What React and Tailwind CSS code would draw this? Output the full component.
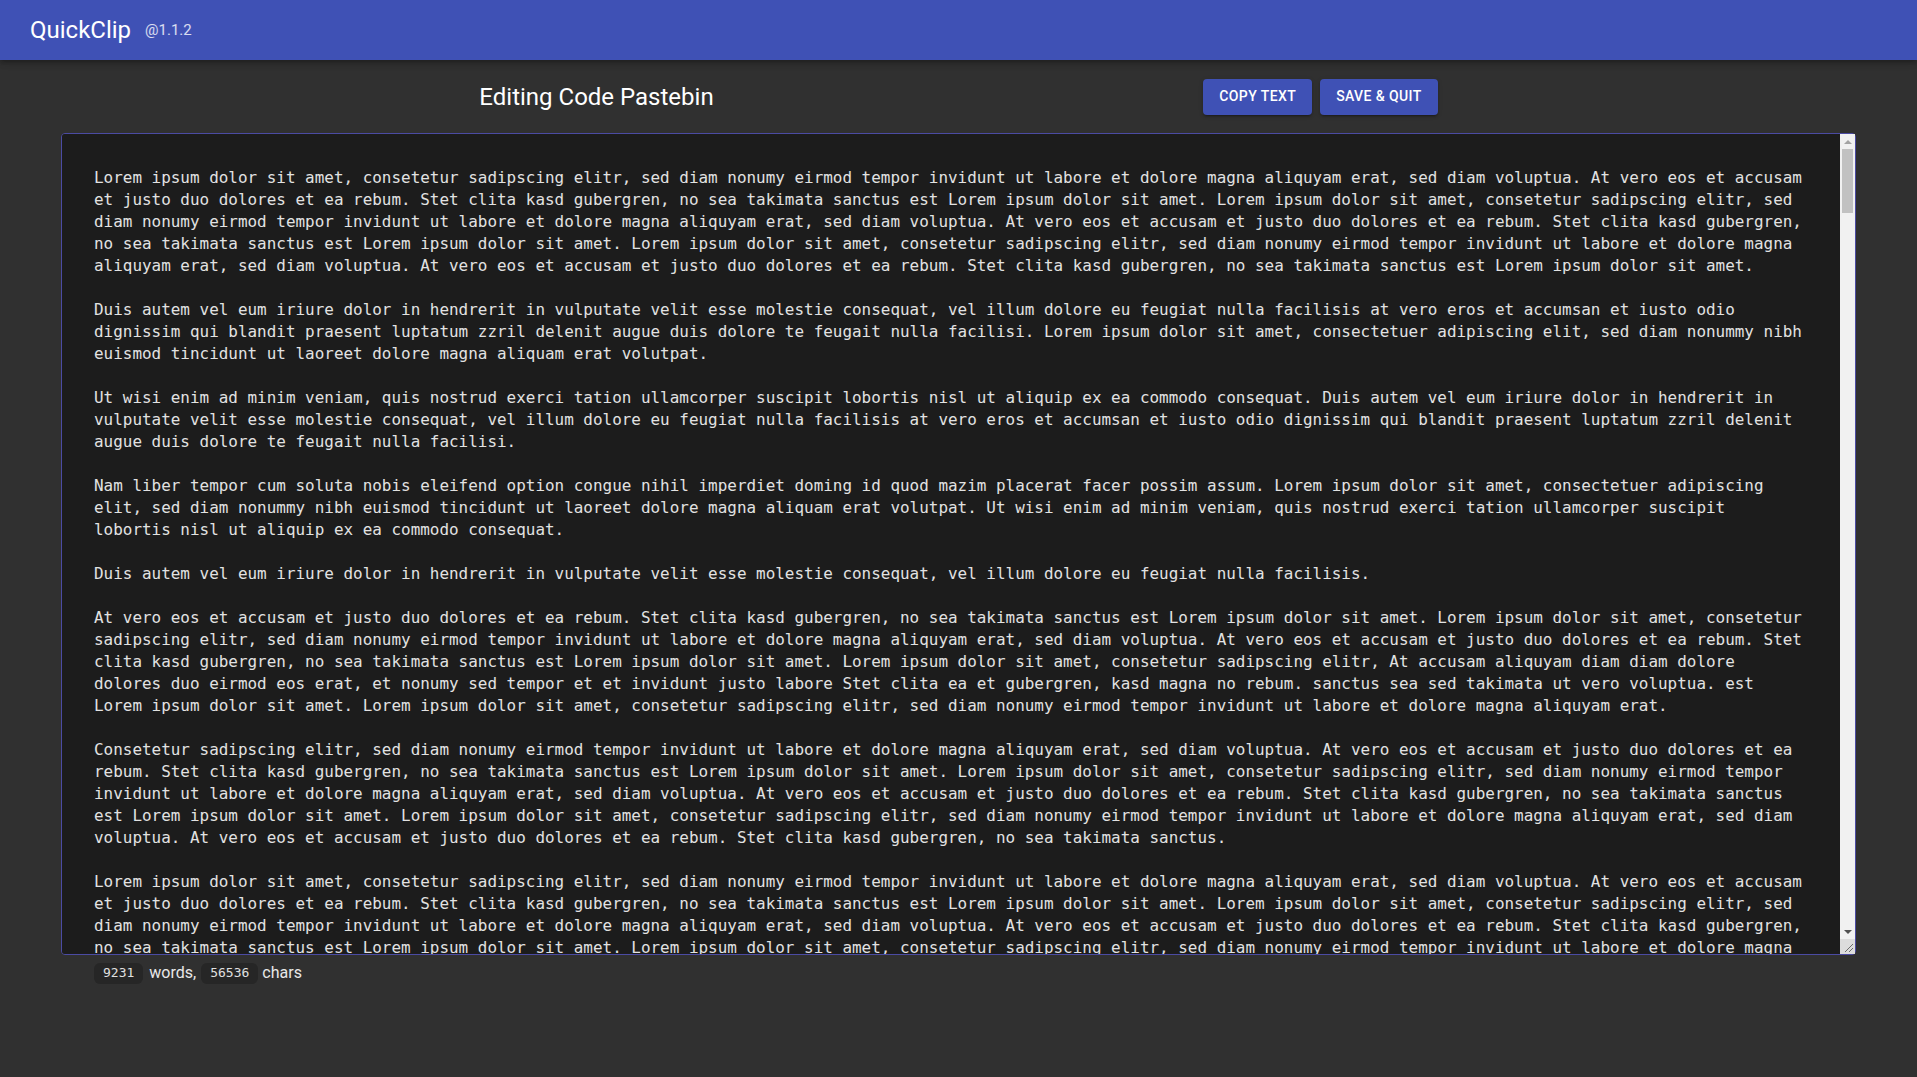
import React, { useState } from 'react';

const PARAGRAPHS = [
  'Lorem ipsum dolor sit amet, consetetur sadipscing elitr, sed diam nonumy eirmod tempor invidunt ut labore et dolore magna aliquyam erat, sed diam voluptua. At vero eos et accusam et justo duo dolores et ea rebum. Stet clita kasd gubergren, no sea takimata sanctus est Lorem ipsum dolor sit amet. Lorem ipsum dolor sit amet, consetetur sadipscing elitr, sed diam nonumy eirmod tempor invidunt ut labore et dolore magna aliquyam erat, sed diam voluptua. At vero eos et accusam et justo duo dolores et ea rebum. Stet clita kasd gubergren, no sea takimata sanctus est Lorem ipsum dolor sit amet. Lorem ipsum dolor sit amet, consetetur sadipscing elitr, sed diam nonumy eirmod tempor invidunt ut labore et dolore magna aliquyam erat, sed diam voluptua. At vero eos et accusam et justo duo dolores et ea rebum. Stet clita kasd gubergren, no sea takimata sanctus est Lorem ipsum dolor sit amet.',
  'Duis autem vel eum iriure dolor in hendrerit in vulputate velit esse molestie consequat, vel illum dolore eu feugiat nulla facilisis at vero eros et accumsan et iusto odio dignissim qui blandit praesent luptatum zzril delenit augue duis dolore te feugait nulla facilisi. Lorem ipsum dolor sit amet, consectetuer adipiscing elit, sed diam nonummy nibh euismod tincidunt ut laoreet dolore magna aliquam erat volutpat.',
  'Ut wisi enim ad minim veniam, quis nostrud exerci tation ullamcorper suscipit lobortis nisl ut aliquip ex ea commodo consequat. Duis autem vel eum iriure dolor in hendrerit in vulputate velit esse molestie consequat, vel illum dolore eu feugiat nulla facilisis at vero eros et accumsan et iusto odio dignissim qui blandit praesent luptatum zzril delenit augue duis dolore te feugait nulla facilisi.',
  'Nam liber tempor cum soluta nobis eleifend option congue nihil imperdiet doming id quod mazim placerat facer possim assum. Lorem ipsum dolor sit amet, consectetuer adipiscing elit, sed diam nonummy nibh euismod tincidunt ut laoreet dolore magna aliquam erat volutpat. Ut wisi enim ad minim veniam, quis nostrud exerci tation ullamcorper suscipit lobortis nisl ut aliquip ex ea commodo consequat.',
  'Duis autem vel eum iriure dolor in hendrerit in vulputate velit esse molestie consequat, vel illum dolore eu feugiat nulla facilisis.',
  'At vero eos et accusam et justo duo dolores et ea rebum. Stet clita kasd gubergren, no sea takimata sanctus est Lorem ipsum dolor sit amet. Lorem ipsum dolor sit amet, consetetur sadipscing elitr, sed diam nonumy eirmod tempor invidunt ut labore et dolore magna aliquyam erat, sed diam voluptua. At vero eos et accusam et justo duo dolores et ea rebum. Stet clita kasd gubergren, no sea takimata sanctus est Lorem ipsum dolor sit amet. Lorem ipsum dolor sit amet, consetetur sadipscing elitr, At accusam aliquyam diam diam dolore dolores duo eirmod eos erat, et nonumy sed tempor et et invidunt justo labore Stet clita ea et gubergren, kasd magna no rebum. sanctus sea sed takimata ut vero voluptua. est Lorem ipsum dolor sit amet. Lorem ipsum dolor sit amet, consetetur sadipscing elitr, sed diam nonumy eirmod tempor invidunt ut labore et dolore magna aliquyam erat.',
  'Consetetur sadipscing elitr, sed diam nonumy eirmod tempor invidunt ut labore et dolore magna aliquyam erat, sed diam voluptua. At vero eos et accusam et justo duo dolores et ea rebum. Stet clita kasd gubergren, no sea takimata sanctus est Lorem ipsum dolor sit amet. Lorem ipsum dolor sit amet, consetetur sadipscing elitr, sed diam nonumy eirmod tempor invidunt ut labore et dolore magna aliquyam erat, sed diam voluptua. At vero eos et accusam et justo duo dolores et ea rebum. Stet clita kasd gubergren, no sea takimata sanctus est Lorem ipsum dolor sit amet. Lorem ipsum dolor sit amet, consetetur sadipscing elitr, sed diam nonumy eirmod tempor invidunt ut labore et dolore magna aliquyam erat, sed diam voluptua. At vero eos et accusam et justo duo dolores et ea rebum. Stet clita kasd gubergren, no sea takimata sanctus.',
];

// fill the paste up to the size of the saved clip
function buildText(size) {
  const parts = [];
  let len = 0;
  let i = 0;
  while (len < size) {
    const p = PARAGRAPHS[i % PARAGRAPHS.length];
    parts.push(p);
    len += p.length + 2;
    i++;
  }
  return parts.join('\n\n').slice(0, size);
}

function Header() {
  return (
    <header className="h-[60px] bg-[#3f51b5] flex items-center px-[30px] shadow-[0_2px_4px_-1px_rgba(0,0,0,0.2),0_4px_5px_0_rgba(0,0,0,0.14),0_1px_10px_0_rgba(0,0,0,0.12)] relative z-10">
      <span className="text-white text-[24px] leading-none font-['Roboto',sans-serif]">QuickClip</span>
      <span className="ml-[14px] text-[15px] text-white/80 font-['Roboto',sans-serif] leading-none">@1.1.2</span>
    </header>
  );
}

function Chip({ children }) {
  return (
    <code className="inline-flex items-center h-[21px] px-[9px] rounded-md bg-[#262626] text-[#e0e0e0] text-[13px] font-['DejaVu_Sans_Mono',monospace]">
      {children}
    </code>
  );
}

// classic light scrollbar drawn over the editor's right edge
function Scrollbar() {
  return (
    <div className="absolute top-px bottom-px right-px w-[15px] flex flex-col bg-[#f1f1f1] pointer-events-none">
      <div className="h-[15px] flex items-center justify-center">
        <div className="w-0 h-0 border-l-[4px] border-r-[4px] border-b-[4px] border-l-transparent border-r-transparent border-b-[#a3a3a3]" />
      </div>
      <div className="flex-1">
        <div className="mx-[2px] h-[64px] bg-[#c1c1c1]" />
      </div>
      <div className="h-[15px] flex items-center justify-center">
        <div className="w-0 h-0 border-l-[4px] border-r-[4px] border-t-[4px] border-l-transparent border-r-transparent border-t-[#505050]" />
      </div>
      <div className="h-[15px] bg-[#dcdcdc] flex items-end justify-end">
        <svg width="15" height="15" viewBox="0 0 15 15">
          <path d="M13 5 L5 13 M13 9 L9 13" stroke="#6b6b6b" strokeWidth="1" />
        </svg>
      </div>
    </div>
  );
}

export default function App() {
  const [text, setText] = useState(() => buildText(56536));
  const stats = { words: 9231, chars: 56536 };

  return (
    <div className="min-h-screen bg-[#303030] font-['Roboto',sans-serif]">
      <Header />
      <main className="mx-[61px]">
        <div className="w-[1448px] mx-auto h-[73px] grid grid-cols-2 items-center">
          <h1 className="text-center text-white text-[24px] font-normal">Editing Code Pastebin</h1>
          <div className="flex justify-center gap-2">
            <button className="h-9 px-4 rounded bg-[#3f51b5] text-white text-[14px] font-medium uppercase tracking-[0.4px] shadow-[0_3px_1px_-2px_rgba(0,0,0,0.2),0_2px_2px_0_rgba(0,0,0,0.14),0_1px_5px_0_rgba(0,0,0,0.12)]">
              Copy Text
            </button>
            <button className="h-9 px-4 rounded bg-[#3f51b5] text-white text-[14px] font-medium uppercase tracking-[0.4px] shadow-[0_3px_1px_-2px_rgba(0,0,0,0.2),0_2px_2px_0_rgba(0,0,0,0.14),0_1px_5px_0_rgba(0,0,0,0.12)]">
              Save &amp; Quit
            </button>
          </div>
        </div>
        <div className="relative">
          <textarea
            value={text}
            onChange={(e) => setText(e.target.value)}
            spellCheck={false}
            className="block w-full h-[822px] bg-[#1c1c1c] text-[#e2e2e2] border border-[#4b4ba3] rounded pl-8 pr-[48px] pt-[33px] pb-8 text-[15.95px] leading-[22px] font-['DejaVu_Sans_Mono',monospace] outline-none resize-none [scrollbar-width:none]"
          />
          <Scrollbar />
        </div>
        <div className="mt-[6px] ml-[33px] flex items-center text-[16px] text-[#e8e8e8]">
          <Chip>{stats.words}</Chip>
          <span className="ml-[6px] mr-[5px]">words,</span>
          <Chip>{stats.chars}</Chip>
          <span className="ml-[4px]">chars</span>
        </div>
      </main>
    </div>
  );
}
